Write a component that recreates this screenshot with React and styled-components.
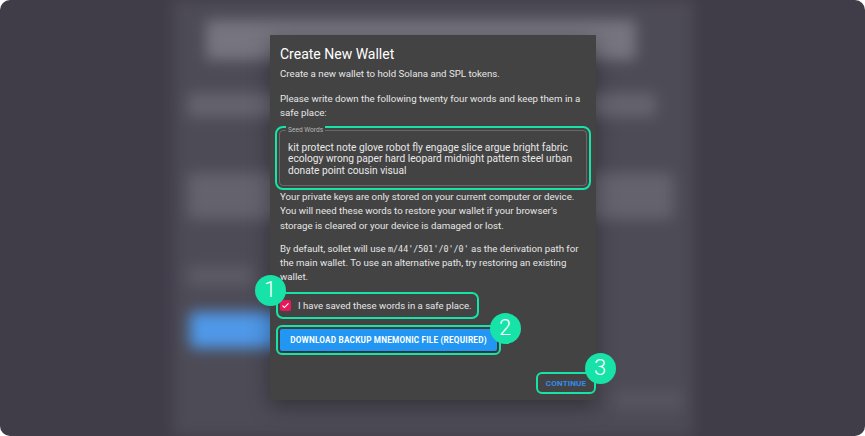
import React from "react";
import styled, { createGlobalStyle } from "styled-components";

const Global = createGlobalStyle`
  html, body { margin: 0; padding: 0; background: #ffffff; }
  body { font-family: Roboto, "Liberation Sans", Arial, sans-serif; }
`;

const MINT = "#17e2a7";

const Frame = styled.div`
  position: relative;
  width: 865px;
  height: 436px;
  border-radius: 10px;
  overflow: hidden;
  background: #403d49;
  display: flex;
  justify-content: center;
`;

const BlurCard = styled.div`
  width: 520px;
  height: 100%;
  background: #4d4b56;
  filter: blur(7px);
  display: flex;
  flex-direction: column;
  align-items: flex-start;
  padding: 0 0 0 15px;
  box-sizing: border-box;
`;

const Blob = styled.div`
  flex: none;
  width: ${(p) => p.$w}px;
  height: ${(p) => p.$h}px;
  margin-top: ${(p) => p.$top}px;
  margin-left: ${(p) => p.$left || 0}px;
  background: ${(p) => p.$c};
  border-radius: 4px;
`;

const Dialog = styled.div`
  position: absolute;
  left: 270px;
  top: 35px;
  width: 326px;
  height: 365px;
  box-sizing: border-box;
  background: #434343;
  padding: 9px 10px 9px 10px;
  display: flex;
  flex-direction: column;
  box-shadow: 0 6px 20px rgba(0, 0, 0, 0.35);
`;

const Title = styled.h2`
  margin: 0;
  font-size: 14px;
  line-height: 20px;
  font-weight: 400;
  color: #ffffff;
`;

const Text = styled.p`
  margin: ${(p) => p.$mt}px 0 0 0;
  font-size: 9.7px;
  line-height: 14.2px;
  color: #e6e6e6;
`;

const Code = styled.code`
  font-family: "DejaVu Sans Mono", "Liberation Mono", monospace;
  font-size: 8.4px;
  line-height: 1;
`;

const Field = styled.div`
  position: relative;
  margin: 9px -1px 0 -1px;
  height: 56px;
  box-sizing: border-box;
  border: 1px solid rgba(255, 255, 255, 0.2);
  border-radius: 4px;
  padding: 11px 8px 0 8px;
  outline: 2.5px solid ${MINT};
  outline-offset: 2px;
`;

const FieldLabel = styled.span`
  position: absolute;
  left: 6px;
  top: -5px;
  padding: 0 2px;
  background: #434343;
  font-size: 6.6px;
  line-height: 9px;
  color: #b8b8b8;
`;

const Seed = styled.div`
  font-size: 10.2px;
  line-height: 11.5px;
  color: #e8e8e8;
`;

const Annotated = styled.div`
  position: relative;
  align-self: ${(p) => p.$align || "flex-start"};
  margin-top: ${(p) => p.$mt}px;
  margin-right: ${(p) => p.$mr || 0}px;
`;

const CheckRow = styled.label`
  display: flex;
  align-items: center;
  gap: 7px;
  height: 19px;
  padding-right: 3px;
  outline: 2.5px solid ${MINT};
  outline-offset: 2px;
  border-radius: 3px;
  font-size: 9.6px;
  color: #e6e6e6;
`;

const Box = styled.span`
  width: 11px;
  height: 11px;
  border-radius: 2px;
  background: #e8185c;
  display: flex;
  align-items: center;
  justify-content: center;
`;

const PrimaryButton = styled.button`
  display: block;
  width: 217px;
  height: 22px;
  border: none;
  border-radius: 2px;
  background: #2196f3;
  color: #ffffff;
  font-family: Roboto, "Liberation Sans", Arial, sans-serif;
  font-weight: 700;
  font-size: 8.2px;
  letter-spacing: 0.2px;
  box-shadow: 0 1px 3px rgba(0, 0, 0, 0.35);
  outline: 2.5px solid ${MINT};
  outline-offset: 2px;
  padding: 0;
`;

const TextButton = styled.button`
  display: block;
  width: 54px;
  height: 16px;
  border: none;
  background: transparent;
  color: #2f8df0;
  font-family: Roboto, "Liberation Sans", Arial, sans-serif;
  font-weight: 700;
  font-size: 8.1px;
  letter-spacing: 0.1px;
  padding: 0;
  border-radius: 3px;
  outline: 2.5px solid ${MINT};
  outline-offset: 1px;
`;

const Badge = styled.span`
  position: absolute;
  width: 31px;
  height: 31px;
  border-radius: 50%;
  background: ${MINT};
  color: #ffffff;
  display: flex;
  align-items: center;
  justify-content: center;
  font-family: Roboto, "Liberation Sans", Arial, sans-serif;
  font-weight: 300;
  font-size: 22px;
  line-height: 1;
  z-index: 2;
  ${(p) => (p.$left !== undefined ? `left: ${p.$left}px;` : "")}
  ${(p) => (p.$right !== undefined ? `right: ${p.$right}px;` : "")}
  top: ${(p) => p.$top}px;
`;

const Spacer = styled.div`
  flex: 1;
`;

export default function App() {
  return (
    <>
      <Global />
      <Frame>
        <BlurCard>
          <Blob $top={20} $left={18} $w={430} $h={40} $c="#76747f" />
          <Blob $top={33} $w={468} $h={24} $c="#65636e" />
          <Blob $top={56} $w={485} $h={46} $c="#64626d" />
          <Blob $top={47} $w={65} $h={20} $c="#5c5a65" />
          <Blob $top={26} $left={2} $w={200} $h={36} $c="#4f98e8" />
          <Blob $top={43} $left={425} $w={70} $h={18} $c="#57555f" />
        </BlurCard>

        <Dialog>
          <Title>Create New Wallet</Title>
          <Text $mt={3}>Create a new wallet to hold Solana and SPL tokens.</Text>
          <Text $mt={11}>
            Please write down the following twenty four words and keep them in a safe place:
          </Text>
          <Field>
            <FieldLabel>Seed Words</FieldLabel>
            <Seed>
              kit protect note glove robot fly engage slice argue bright fabric ecology wrong
              paper hard leopard midnight pattern steel urban donate point cousin visual
            </Seed>
          </Field>
          <Text $mt={4.6}>
            Your private keys are only stored on your current computer or device. You will
            need these words to restore your wallet if your browser's storage is cleared or
            your device is damaged or lost.
          </Text>
          <Text $mt={9}>
            By default, sollet will use <Code>m/44'/501'/0'/0'</Code> as the derivation path
            for the main wallet. To use an alternative path, try restoring an existing wallet.
          </Text>

          <Annotated $mt={12}>
            <CheckRow>
              <Box>
                <svg width="9" height="9" viewBox="0 0 24 24">
                  <path d="M4 12.5l5 5L20 6.5" fill="none" stroke="#fff" strokeWidth="3" />
                </svg>
              </Box>
              I have saved these words in a safe place.
            </CheckRow>
            <Badge $left={-25.5} $top={-21.5}>1</Badge>
          </Annotated>

          <Annotated $mt={14}>
            <PrimaryButton>DOWNLOAD BACKUP MNEMONIC FILE (REQUIRED)</PrimaryButton>
            <Badge $right={-23.5} $top={-16.5}>2</Badge>
          </Annotated>

          <Spacer />

          <Annotated $align="flex-end" $mr={-7}>
            <TextButton>CONTINUE</TextButton>
            <Badge $right={-22.5} $top={-22.5}>3</Badge>
          </Annotated>
        </Dialog>
      </Frame>
    </>
  );
}
